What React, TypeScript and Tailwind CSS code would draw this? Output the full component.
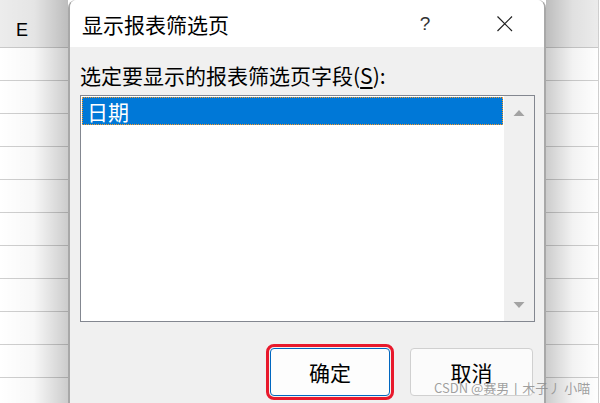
import React from "react";

const cjk = "font-['Microsoft_YaHei','Noto_Sans_CJK_SC',sans-serif]";

const SheetStrip = ({ side, label }: { side: "left" | "right"; label?: string }) => {
  const rows = Array.from({ length: 11 });
  return (
    <div className={`relative h-full overflow-hidden bg-white ${side === "left" ? "w-[68px]" : "w-[54px]"}`}>
      <div className={`flex h-full flex-col ${side === "right" ? "w-[53px] border-r border-[#cfcfcf]" : ""}`}>
        <div className="flex h-[48px] shrink-0 items-end border-b border-[#c9c9c9] bg-[#ececec] pb-[6px] pl-[16px]">
          {label && <span className="font-['Liberation_Sans',sans-serif] text-[18px] leading-[22px] text-black">{label}</span>}
        </div>
        {rows.map((_, i) => (
          <div key={i} className="h-[33px] shrink-0 border-b border-[#cfcfcf]" />
        ))}
      </div>
      {/* window shadow falling on the sheet */}
      {side === "left" ? (
        <div className="absolute inset-0 bg-linear-to-r from-transparent via-black/[0.03] to-black/[0.2]" />
      ) : (
        <div className="absolute inset-0 bg-linear-to-r from-black/[0.2] via-black/[0.05] to-transparent" />
      )}
    </div>
  );
};

const Arrow = ({ up }: { up: boolean }) => (
  <svg width="30" height="30" viewBox="0 0 30 30">
    <polygon points={up ? "9.5,20 20.5,20 15,14" : "9.5,11 20.5,11 15,17"} fill="#a3a3a3" />
  </svg>
);

export default function App() {
  return (
    <div className={`relative flex h-[403px] w-[600px] overflow-hidden bg-white ${cjk}`}>
      <SheetStrip side="left" label="E" />

      {/* Dialog */}
      <div className="flex h-full w-[478px] shrink-0 flex-col overflow-hidden rounded-t-[8px] border-x-2 border-[#a8a8a8] bg-[#f0f0f0]">
        <div className="flex h-[47px] shrink-0 items-center bg-white pl-[12px] pr-[29px]">
          <span className="text-[21px] leading-[28px] text-black">显示报表筛选页</span>
          <span className="ml-auto w-[20px] text-center font-['Liberation_Sans',sans-serif] text-[19px] leading-[24px] text-[#333]">?</span>
          <svg className="ml-[60px]" width="20" height="20" viewBox="0 0 20 20">
            <path d="M2.5 2.5 L17 17 M17 2.5 L2.5 17" stroke="#222" strokeWidth="1.2" />
          </svg>
        </div>

        <div className="flex flex-1 flex-col pl-[10px] pr-[9px] pt-[14px]">
          <div className="text-[21px] leading-[28px] text-black">
            选定要显示的报表筛选页字段(<span className="underline underline-offset-[3px]">S</span>):
          </div>

          <div className="mt-[6px] flex h-[227px] border border-[#838790] bg-white">
            <div className="flex-1 p-[1px]">
              <div className="flex h-[28px] items-center border border-dotted border-[#f59a2b] bg-[#0078d7] pl-[4px] text-[21px] leading-[26px] text-white">
                日期
              </div>
            </div>
            <div className="flex w-[30px] flex-col justify-between bg-[#f0f0f0]">
              <Arrow up />
              <Arrow up={false} />
            </div>
          </div>

          <div className="mt-[26px] flex justify-end gap-[20px] pr-[2px]">
            <button className="h-[48px] w-[120px] rounded-[4px] border border-[#0067c0] bg-[#fdfdfd] text-[21px] leading-[28px] text-black outline-[3px] outline-offset-[1px] outline-[#e8192c] outline-solid">
              确定
            </button>
            <button className="h-[48px] w-[123px] rounded-[4px] border border-[#d0d0d0] bg-[#fbfbfb] text-[21px] leading-[28px] text-black">
              取消
            </button>
          </div>
        </div>
      </div>

      <SheetStrip side="right" />

      {/* watermark */}
      <div className="absolute left-[434px] top-[379px] whitespace-nowrap text-[13px] leading-[18px] text-[#8f8f8f]/85">
        CSDN @赛男丨木子丿 小喵
      </div>
    </div>
  );
}
